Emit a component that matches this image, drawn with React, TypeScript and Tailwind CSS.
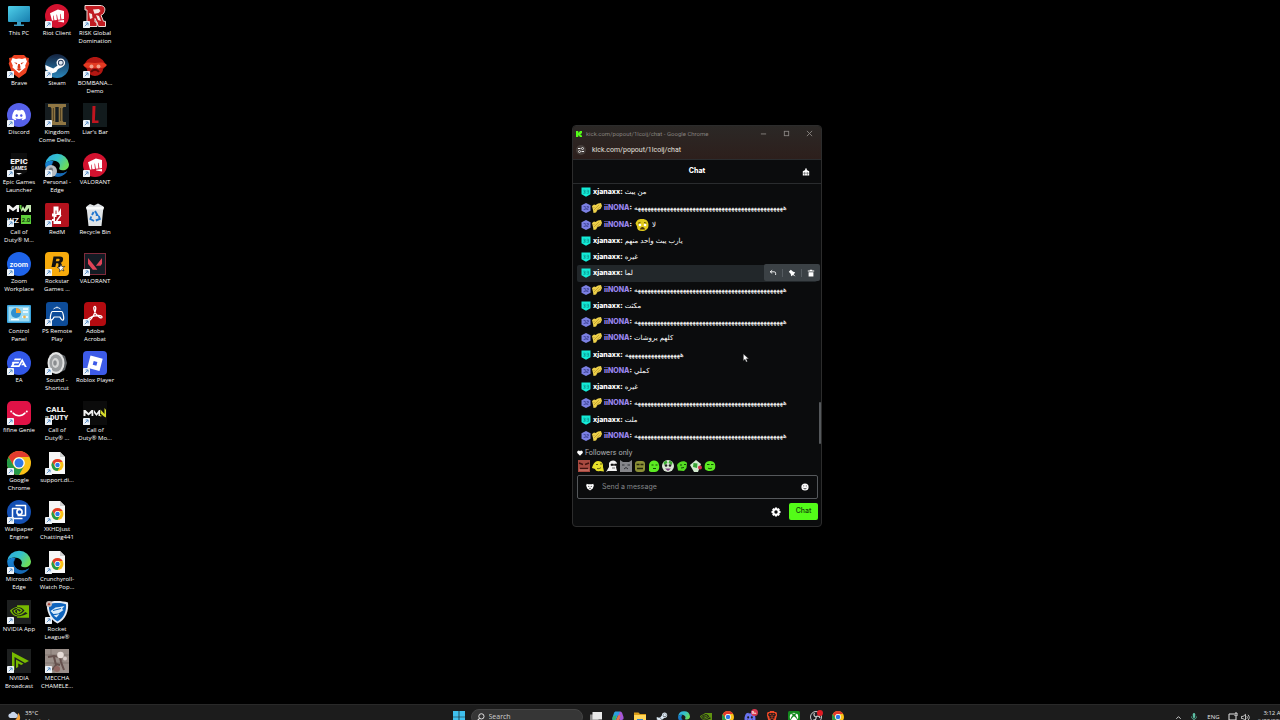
import type { ReactNode } from "react";
import { FaDiscord, FaSteamSymbol, FaXbox } from "react-icons/fa";
import { SiBrave, SiNvidia, SiRiotgames, SiValorant } from "react-icons/si";

/* ---------- Icon drawings (24 x 24 box) ---------- */

function Box({ children, className = "size-6" }: { children: ReactNode; className?: string }) {
  return (
    <svg viewBox="0 0 24 24" className={className} aria-hidden="true">
      {children}
    </svg>
  );
}

function ChromeMark({ className = "size-6" }: { className?: string }) {
  return (
    <Box className={className}>
      <ChromeShape />
    </Box>
  );
}

function ChromeShape() {
  return (
    <>
      <circle cx="12" cy="12" r="12" fill="#fbc116" />
      <path d="M1.6 6A12 12 0 0 1 22.4 6H12a6 6 0 0 0-5.2 9z" fill="#e33b2e" />
      <path d="M1.6 6A12 12 0 0 0 12 24l5.2-9A6 6 0 0 1 6.8 15z" fill="#249a47" />
      <circle cx="12" cy="12" r="5.8" fill="#fff" />
      <circle cx="12" cy="12" r="4.5" fill="#2f78e8" />
    </>
  );
}

function EdgeMark({ className = "size-6" }: { className?: string }) {
  return (
    <Box className={className}>
      <defs>
        <linearGradient id="edgeTop" x1="0" y1="0" x2="1" y2="0.5">
          <stop offset="0" stopColor="#2aa7e6" />
          <stop offset="0.55" stopColor="#35c2c9" />
          <stop offset="1" stopColor="#6bdc5c" />
        </linearGradient>
        <linearGradient id="edgeLow" x1="0" y1="0" x2="1" y2="1">
          <stop offset="0" stopColor="#1a8ad9" />
          <stop offset="1" stopColor="#0c4f9c" />
        </linearGradient>
      </defs>
      <path d="M0.2 11A12 12 0 0 1 24 11.2c0 4-3 6-6.3 6-3 0-4.200-1.200-3.400-2.400 1-1.400.8-3.600-.6-5C10.500 6.600 3 6.500.2 11z" fill="url(#edgeTop)" />
      <path d="M.2 11C2 7.800 6 7.200 8.600 8.400 6 10.500 6 15 9 18c3 3 8 3.300 13.200.2A12 12 0 0 1 .2 11z" fill="url(#edgeLow)" />
      <path d="M8.600 8.400C6 10.500 6 15 9 18c3 3 8 3.300 13.200.2-2.500 4-6.500 5.600-9.800 5.600-5-1-8.500-8.300-3.800-15.400z" fill="#176bb5" />
    </Box>
  );
}

function PageWithChrome() {
  return (
    <Box>
      <path d="M4 1h11l5 5v17H4z" fill="#f7f7f7" />
      <path d="M15 1l5 5h-5z" fill="#cfcfcf" />
      <g transform="translate(6.500 8) scale(0.5)">
        <ChromeShape />
      </g>
    </Box>
  );
}

function NvidiaTile() {
  return (
    <Box>
      <rect width="24" height="24" fill="#1d1f1f" />
      <SiNvidia x="3" y="2" size="19" color="#77b900" />
    </Box>
  );
}

type Shortcut = { name: string; lines: string[]; icon: ReactNode; arrow?: boolean };

const riot = (
  <Box>
    <circle cx="12" cy="12" r="12" fill="#d3122f" />
    <SiRiotgames x="5" y="5" size="14" color="#fff" />
  </Box>
);

const columns: Shortcut[][] = [
  [
    {
      name: "This PC",
      lines: ["This PC"],
      arrow: false,
      icon: (
        <Box>
          <defs>
            <linearGradient id="pc" x1="0" y1="0" x2="1" y2="1">
              <stop offset="0" stopColor="#4fd0ea" />
              <stop offset="1" stopColor="#167dae" />
            </linearGradient>
          </defs>
          <rect x="1" y="2" width="22" height="16" rx="1" fill="url(#pc)" />
          <path d="M10 18h4v2.500h3V22H7v-1.500h3z" fill="#3c9cc2" />
        </Box>
      ),
    },
    {
      name: "Brave",
      lines: ["Brave"],
      icon: (
        <Box>
          <path d="M7 1h10l2.500 2.500L22 4l-.5 3.500.8 2L19 19l-7 5-7-5L1.700 9.500l.8-2L2 4l2.500-.5z" fill="#ee4322" />
          <path d="M12 4.500l3 .4 3.500-.8 1.500 3.500-1.800 4 .3 2-3 2.300L12 19l-3.500-3.100-3-2.300.3-2L4 7.600l1.500-3.500 3.500.8z" fill="#fff" />
          <path d="M7 8.200l3.300.9-.5 1.400zM17 8.200l-3.300.9.5 1.400zM11.200 10h1.600l.8 3.500L12 14.500l-1.600-1zM9.500 15l2.500-1 2.500 1-2.500 2z" fill="#d83a1c" />
        </Box>
      ),
    },
    {
      name: "Discord",
      lines: ["Discord"],
      icon: (
        <Box>
          <circle cx="12" cy="12" r="12" fill="#5661ea" />
          <FaDiscord x="4.500" y="4.500" size="15" color="#fff" />
        </Box>
      ),
    },
    {
      name: "Epic Games Launcher",
      lines: ["Epic Games", "Launcher"],
      icon: (
        <Box>
          <path d="M4 0h16v19l-8 4.500L4 19z" fill="#0d0d0d" />
          <text x="12" y="11" textAnchor="middle" fontSize="8" fontWeight="900" fill="#f2f2f2" className="font-['Roboto',sans-serif]">EPIC</text>
          <text x="12" y="17" textAnchor="middle" fontSize="4.500" fontWeight="700" fill="#f2f2f2" className="font-['Roboto',sans-serif]">GAMES</text>
          <path d="M9 20h6l-3 1.800z" fill="#f2f2f2" />
        </Box>
      ),
    },
    {
      name: "Call of Duty MWIII",
      lines: ["Call of", "Duty® M..."],
      icon: (
        <Box>
          <path d="M0 9V2h2.500L6 5l3.500-3H12v7h-2.200V5.500L6 8.300 2.200 5.500V9z" fill="#f0f0f0" />
          <path d="M12.500 2l2 4 1.500-3 1.500 3 2-4H24v7h-2V5l-3.500 4h-1L16 7l-1.500 2z" fill="#c6ecb2" />
          <path d="M12.500 2h2v5l-2-2z" fill="#5fd03a" />
          <text x="0" y="20" fontSize="8" fontWeight="700" fill="#f0f0f0" className="font-['Roboto',sans-serif]">WZ</text>
          <rect x="14" y="12" width="10" height="9" fill="#5fd03a" />
          <text x="19" y="18.500" textAnchor="middle" fontSize="6" fontWeight="700" fill="#143c0c" className="font-['Roboto',sans-serif]">2.0</text>
        </Box>
      ),
    },
    {
      name: "Zoom Workplace",
      lines: ["Zoom", "Workplace"],
      icon: (
        <Box>
          <circle cx="12" cy="12" r="12" fill="#1e63e9" />
          <text x="12" y="14.500" textAnchor="middle" fontSize="7.500" fontWeight="700" fill="#fff" className="font-['Lato',sans-serif]">zoom</text>
        </Box>
      ),
    },
    {
      name: "Control Panel",
      lines: ["Control", "Panel"],
      arrow: false,
      icon: (
        <Box>
          <rect x="0" y="3" width="24" height="18" rx="1" fill="#3aa4dc" />
          <rect x="1.500" y="4.500" width="21" height="15" fill="#9bdcf5" />
          <circle cx="9" cy="11" r="5" fill="#2d8fd0" />
          <path d="M9 11V6a5 5 0 0 1 5 5z" fill="#f4a63a" />
          <path d="M16 7h5M16 10h5M4 17.500h8M15 15h6" stroke="#fff" strokeWidth="1.500" />
          <circle cx="17.500" cy="15" r="1.400" fill="#f0b04a" />
        </Box>
      ),
    },
    {
      name: "EA",
      lines: ["EA"],
      icon: (
        <Box>
          <circle cx="12" cy="12" r="12" fill="#3258e8" />
          <path d="M7.800 7.500h6.400l-.9 1.700H6.900zM5.600 10.700h6.800l-1 1.700H7.600l-1 1.900h4.900l3.700-6.800L19.800 16h-2l-.9-1.700h-2.700l1-1.700h.9l-.9-1.700-2.800 5.100H3.500l2-3.600h-.8z" fill="#fff" />
        </Box>
      ),
    },
    {
      name: "fifine Genie",
      lines: ["fifine Genie"],
      icon: (
        <Box>
          <rect width="24" height="24" rx="5" fill="#e01246" />
          <path d="M6 12c3 3.600 9 3.600 12 0" fill="none" stroke="#fff" strokeWidth="1.500" strokeLinecap="round" />
          <circle cx="4.200" cy="10.500" r="1" fill="#fff" />
          <circle cx="19.800" cy="10.500" r="1" fill="#fff" />
        </Box>
      ),
    },
    { name: "Google Chrome", lines: ["Google", "Chrome"], icon: <ChromeMark /> },
    {
      name: "Wallpaper Engine",
      lines: ["Wallpaper", "Engine"],
      icon: (
        <Box>
          <circle cx="12" cy="12" r="12" fill="#1450b4" />
          <path d="M8.500 5.500h10v8M15.500 18.500h-10v-8M5.500 13V8.500h8M18.500 11v4.500h-8" fill="none" stroke="#fff" strokeWidth="1.500" strokeLinejoin="round" />
          <circle cx="12.500" cy="12" r="2.600" fill="none" stroke="#fff" strokeWidth="1.600" />
        </Box>
      ),
    },
    { name: "Microsoft Edge", lines: ["Microsoft", "Edge"], icon: <EdgeMark /> },
    { name: "NVIDIA App", lines: ["NVIDIA App"], icon: <NvidiaTile /> },
    {
      name: "NVIDIA Broadcast",
      lines: ["NVIDIA", "Broadcast"],
      icon: (
        <Box>
          <rect width="24" height="24" fill="#1d1f1f" />
          <path d="M5 3l17 9-4 2L7.500 8v13L5 22z" fill="#77b900" />
          <path d="M9 10.500l7.500 4.300-2.300 1.300-3-1.700V18L9 19.200z" fill="#77b900" />
        </Box>
      ),
    },
  ],
  [
    { name: "Riot Client", lines: ["Riot Client"], icon: riot },
    {
      name: "Steam",
      lines: ["Steam"],
      icon: (
        <Box>
          <defs>
            <linearGradient id="steam" x1="0" y1="0" x2="0" y2="1">
              <stop offset="0" stopColor="#14233f" />
              <stop offset="1" stopColor="#2a86bb" />
            </linearGradient>
          </defs>
          <circle cx="12" cy="12" r="12" fill="url(#steam)" />
          <path d="M.3 11l8 3.400 4-2.600 2-2.500 3.500 3.500-4.700 2.200-2 3-3.600 1.200L.8 15.500z" fill="#fff" />
          <circle cx="15.800" cy="8.700" r="4.300" fill="#fff" />
          <circle cx="15.800" cy="8.700" r="2.900" fill="#23395c" />
          <circle cx="15.800" cy="8.700" r="2" fill="#dfe6ee" />
        </Box>
      ),
    },
    {
      name: "Kingdom Come Deliverance II",
      lines: ["Kingdom", "Come Deliv..."],
      icon: (
        <Box>
          <rect width="24" height="24" fill="#161d20" />
          <path d="M3 1h18v3h-2.500l-1 1.500v12l1 1.500H21V22H3v-3h2.500l1-1.500v-12L5.500 4H3z" fill="#8f7643" />
          <path d="M10.300 4h3.400v15h-3.400z" fill="#161d20" />
          <path d="M8.400 5v13M15.600 5v13" stroke="#4f3f22" strokeWidth="1" />
        </Box>
      ),
    },
    {
      name: "Personal - Edge",
      lines: ["Personal -", "Edge"],
      icon: (
        <span className="relative block">
          <EdgeMark />
          <svg viewBox="0 0 12 12" className="absolute bottom-0 left-0 size-3" aria-hidden="true">
            <circle cx="6" cy="6" r="6" fill="#b9bdc2" />
            <circle cx="6" cy="4.500" r="2" fill="#73787e" />
          </svg>
        </span>
      ),
    },
    {
      name: "RedM",
      lines: ["RedM"],
      icon: (
        <Box>
          <rect width="24" height="24" rx="1.500" fill="#b3121d" />
          <path d="M8.500 3.500h3v4h-1v3.500h1V3.500h2v6L16 5v7h-4.500v2h-1.500v4h6V21H8.500v-3H7v-2h1.500v-2.500H7v-3h1.500z" fill="#fff" />
          <path d="M11.500 18l4.500-6" stroke="#fff" strokeWidth="1.400" />
        </Box>
      ),
    },
    {
      name: "Rockstar Games Launcher",
      lines: ["Rockstar", "Games ..."],
      icon: (
        <Box>
          <rect width="24" height="24" rx="4" fill="#f7ab0c" />
          <path d="M8.500 4.500h6.200c2.600 0 3.800 1 3.300 3.400-.3 1.600-1.200 2.500-2.500 2.900 1 .5 1.200 1.200 1 2.700l-.2 1.500h-3.100l.3-2.400c.1-1-.2-1.400-1.200-1.400h-1.100L10.300 15H6.500zm2.900 2.300l-.6 2.500h2c1 0 1.700-.4 1.800-1.300.2-.9-.3-1.200-1.200-1.200z" fill="#111" />
          <path d="M16 12l1 2.700 2.800-.3-2 2 1.200 2.600-2.500-1.200-2.100 1.900.2-2.800-2.300-1.500 2.700-.7z" fill="#fff" stroke="#111" strokeWidth="0.600" />
        </Box>
      ),
    },
    {
      name: "PS Remote Play",
      lines: ["PS Remote", "Play"],
      icon: (
        <Box>
          <rect x="1" width="22" height="24" rx="3" fill="#0d4c99" />
          <path d="M7.500 9.500h9c1.500 0 3 7.500 1.700 8.500-1.300.8-2.700-2-3.300-3H9.100c-.6 1-2 3.800-3.300 3-1.300-1 .2-8.500 1.700-8.500z" fill="none" stroke="#fff" strokeWidth="1.200" />
          <path d="M8.500 7a5 5 0 0 1 7 0M12 4.500v1" fill="none" stroke="#fff" strokeWidth="0.900" />
        </Box>
      ),
    },
    {
      name: "Sound Shortcut",
      lines: ["Sound -", "Shortcut"],
      icon: (
        <Box>
          <path d="M12 1l8 4 2 7-2 7-8 4z" fill="#5c6064" />
          <ellipse cx="11" cy="12" rx="8.500" ry="11" fill="#e3e4e4" />
          <ellipse cx="11" cy="12" rx="6.500" ry="8.800" fill="#9b9ea0" />
          <ellipse cx="10.500" cy="12" rx="3.500" ry="5" fill="#d5d6d6" />
          <ellipse cx="10" cy="12" rx="1.800" ry="2.800" fill="#8a8d90" />
        </Box>
      ),
    },
    {
      name: "Call of Duty HQ",
      lines: ["Call of", "Duty® ..."],
      icon: (
        <Box>
          <text x="1" y="11" fontSize="8" fontWeight="900" fill="#eee" className="font-['Roboto',sans-serif]">CALL</text>
          <text x="0" y="18" fontSize="3" fontWeight="700" fill="#eee" className="font-['Roboto',sans-serif]">OF</text>
          <text x="5" y="18.500" fontSize="7" fontWeight="900" fill="#eee" className="font-['Roboto',sans-serif]">DUTY</text>
        </Box>
      ),
    },
    { name: "support.discord", lines: ["support.di..."], icon: <PageWithChrome /> },
    { name: "XKHDJust Chatting441", lines: ["XKHDJust", "Chatting441"], icon: <PageWithChrome /> },
    { name: "Crunchyroll Watch Popular", lines: ["Crunchyroll-", "Watch Pop..."], icon: <PageWithChrome /> },
    {
      name: "Rocket League",
      lines: ["Rocket", "League®"],
      icon: (
        <Box>
          <path d="M2 2.500C7 .500 17 .500 23 2.500c1 8-2 17-10.500 21C4.500 19.500 1 10.500 2 2.500z" fill="#e8eef5" />
          <path d="M4 4.200c5-1.500 12-1.500 17 0 .6 6.600-2 13.800-8.500 17.300C6 18 3.300 10.800 4 4.200z" fill="#0e64bd" />
          <path d="M5.500 11l5-3.500 4-.5 5-1-2.500 3 1.500 1-5 3.500-5 .5zM8.500 15.500l6-1.500-3 3.500z" fill="#d9ecfb" />
          <path d="M8 10.500l8-2" stroke="#0e64bd" strokeWidth="1" />
          <circle cx="4" cy="4" r="3" fill="#c9b7b2" />
          <path d="M2.500 4.500l1.500-2 1.500 2-1.500 1z" fill="#a23a30" />
        </Box>
      ),
    },
    {
      name: "MECCHA CHAMELEON",
      lines: ["MECCHA", "CHAMELE..."],
      icon: (
        <Box>
          <rect width="24" height="24" fill="#9b8f89" />
          <path d="M0 6h24M0 14h24M6 0v6M17 6v8M9 14v10" stroke="#776b66" strokeWidth="0.700" />
          <path d="M3 8l6-1 6 1 1 5 3 8M9 8l2 8-4 5M11 15l4 1" fill="none" stroke="#65514d" strokeWidth="2" />
          <circle cx="15.500" cy="6" r="3.300" fill="#e6dcd7" />
          <circle cx="20" cy="9.500" r="2" fill="#d8ccc8" />
          <circle cx="12" cy="20" r="3" fill="#8e6560" />
        </Box>
      ),
    },
  ],
  [
    {
      name: "RISK Global Domination",
      lines: ["RISK Global", "Domination"],
      icon: (
        <Box>
          <path d="M2 1.500h15c4.500 0 5.500 3 4.500 6-.6 2-1.600 3-3.500 3.800l2.500 6h2v5.200h-7L12 14.500V18h2v4.500H2V18h2V6H2z" fill="#c01b20" stroke="#f0dcd8" strokeWidth="1" />
          <path d="M10 5.500l6-.5 1.500 2-2 2-4 .8zM6 9l3 1 .5 4L7 15zM13 11l3 1 2 5-3-1z" fill="#f4e8e4" />
        </Box>
      ),
    },
    {
      name: "BOMBANANA Demo",
      lines: ["BOMBANA...", "Demo"],
      icon: (
        <Box>
          <path d="M1 12C3 5 8 3 12 3s9 2 11 9l-3 3c0 4-4 7-8 7s-8-3-8-7z" fill="#b31712" />
          <path d="M0 11c4-4 8-2 12-2s8-2 12 2c-3 4-7 3-12 3S3 15 0 11z" fill="#e33a22" />
          <circle cx="8.500" cy="12.500" r="2" fill="#f2a08a" />
          <circle cx="15.500" cy="12.500" r="2" fill="#f2a08a" />
          <path d="M8 18c2-3 6-3 8 0" stroke="#5b0906" strokeWidth="2" fill="none" />
        </Box>
      ),
    },
    {
      name: "Liar's Bar",
      lines: ["Liar's Bar"],
      icon: (
        <Box>
          <rect width="24" height="24" fill="#121b1d" />
          <path d="M9.500 3h3l-.6 14.500h3.600V20H9z" fill="#c0151f" />
        </Box>
      ),
    },
    { name: "VALORANT (Riot)", lines: ["VALORANT"], icon: riot },
    {
      name: "Recycle Bin",
      lines: ["Recycle Bin"],
      arrow: false,
      icon: (
        <Box>
          <path d="M3.500 3.500L7 1l4 1.500L15 .500l5.500 3L18.500 23h-13z" fill="#dfe3e6" />
          <path d="M3 4h18l-.5 2.500h-17z" fill="#f8fafb" />
          <path d="M12 8l2.400 4h-1.600M15.800 13l1 3-4 1.500M8.200 13.500L7.400 16l3.600 2M9 12l1.600-3" fill="none" stroke="#2277cf" strokeWidth="1.900" />
        </Box>
      ),
    },
    {
      name: "VALORANT",
      lines: ["VALORANT"],
      icon: (
        <Box>
          <rect x="1.500" y="1.500" width="21" height="21" fill="#141b24" stroke="#7e2b3b" strokeWidth="1" />
          <SiValorant x="5" y="5" size="14" color="#e04357" />
        </Box>
      ),
    },
    {
      name: "Adobe Acrobat",
      lines: ["Adobe", "Acrobat"],
      icon: (
        <Box>
          <rect x="1" y="0" width="22" height="24" rx="4" fill="#b30b10" />
          <path d="M11.500 4.500c2-.6 1.600 4-.8 8.500-2 3.800-4.600 6.600-5.700 5.600-1.200-1.200 3-4.200 7-4.800 3.500-.6 7.400-.2 7 1.400-.5 1.700-4-.3-6-3.200-1.900-2.600-3-7-1.500-7.500z" fill="none" stroke="#fff" strokeWidth="1.300" />
        </Box>
      ),
    },
    {
      name: "Roblox Player",
      lines: ["Roblox Player"],
      icon: (
        <Box>
          <rect width="24" height="24" rx="4" fill="#3d5be8" />
          <path d="M7.500 4.500l12.200 3.200-3.200 12.200L4.300 16.700zm3.200 5.500l-1 3.700 3.700 1 1-3.700z" fill="#fff" fillRule="evenodd" />
        </Box>
      ),
    },
    {
      name: "Call of Duty Modern Warfare",
      lines: ["Call of", "Duty® Mo..."],
      icon: (
        <Box>
          <rect width="24" height="24" fill="#0b0b0b" />
          <path d="M.5 15V9h2L5.500 12 8.500 9h1.800v6H8.500v-3l-3 2.500-3-2.500v3zM11 9l2.500 3.500L16 9h1v6h-1.500v-2.500L13.500 15 11 12z" fill="#f2f2f2" />
          <path d="M17.500 8.500l4 4.500V7l1.500 2v7.500l-2-1-3.500-3zM18 16l-1.500-2 2 .5z" fill="#d6dc2c" />
        </Box>
      ),
    },
  ],
];

function ShortcutArrow() {
  return (
    <svg viewBox="0 0 8 8" className="absolute bottom-0 left-0 size-[7px]" aria-hidden="true">
      <rect width="8" height="8" rx="1" fill="#eef3f8" />
      <path d="M2 6l3.600-3.600M3 2.200h2.800V5" stroke="#4a86c4" strokeWidth="1" fill="none" />
    </svg>
  );
}

function DesktopIcon({ item }: { item: Shortcut }) {
  return (
    <li className="flex justify-center">
      <button type="button" aria-label={item.name} className="flex h-fit flex-col items-center">
        <span className="relative block size-6">
          {item.icon}
          {item.arrow !== false && <ShortcutArrow />}
        </span>
        <span className="mt-px block text-center text-[6px] leading-[8px] font-medium whitespace-nowrap text-white">
          {item.lines.map((line) => (
            <span key={line} className="block">
              {line}
            </span>
          ))}
        </span>
      </button>
    </li>
  );
}

/* ---------- Chat window ---------- */

type Message = { user: "x" | "n"; text: string; emote?: boolean; active?: boolean };

const longLaugh = "ه".repeat(47);
const shortLaugh = "ه".repeat(18);

const messages: Message[] = [
  { user: "x", text: "من يبث" },
  { user: "n", text: longLaugh },
  { user: "n", text: "لا", emote: true },
  { user: "x", text: "يارب يبث واحد منهم" },
  { user: "x", text: "غيره" },
  { user: "x", text: "لما", active: true },
  { user: "n", text: longLaugh },
  { user: "x", text: "مكثت" },
  { user: "n", text: longLaugh },
  { user: "n", text: "كلهم يروشات" },
  { user: "x", text: shortLaugh },
  { user: "n", text: "كملي" },
  { user: "x", text: "غيره" },
  { user: "n", text: longLaugh },
  { user: "x", text: "ملت" },
  { user: "n", text: longLaugh },
];

function ShieldBadge() {
  return (
    <svg viewBox="0 0 10 10" className="size-[10px] shrink-0" aria-hidden="true">
      <path d="M.5.5h9v6.700L5 9.800.5 7.200z" fill="#14ecd8" />
      <path d="M2.200 3.200h2v1.300H3v.6h1.200v1.200h-2M5.600 3.200h2v3.100h-2M5.600 4.700h2" stroke="#0b8583" strokeWidth="0.600" fill="none" />
    </svg>
  );
}

function HexBadge() {
  return (
    <svg viewBox="0 0 10 10" className="size-[10px] shrink-0" aria-hidden="true">
      <path d="M5 0l4.500 2.300v5.400L5 10 .5 7.700V2.300z" fill="#7b80e2" />
      <path d="M2.600 3.500h1.700v3H2.600M5.700 3.500h1.700v1.500H5.700v1.500h1.700" stroke="#3d4194" strokeWidth="0.800" fill="none" />
    </svg>
  );
}

function GoldBadge() {
  return (
    <svg viewBox="0 0 10 10" className="size-[10px] shrink-0" aria-hidden="true">
      <path d="M0 3l2-1.500 1.500.5L6 .5 9 0l1 3-1.500 3-3 1L4 9.500 1.500 10 1 7 .5 5z" fill="#edd04a" />
      <path d="M2 7l5-5M4.500 7l4-3.500M1.500 4l1 1" stroke="#a88522" strokeWidth="0.600" />
    </svg>
  );
}

function CryEmote() {
  return (
    <svg viewBox="0 0 14 12" className="ml-[3px] h-3 w-[14px] shrink-0" aria-hidden="true">
      <path d="M.5 4.500C2 0 5 0 7.500 0 11 0 13.500 2 13.500 6c0 4-3 6-6.500 6-3.500 0-5-1.500-5-4.500z" fill="#e0cb1e" />
      <path d="M3 4.200l2.500-.8M11.500 4.200L9 3.400" stroke="#5a4a05" strokeWidth="0.900" />
      <circle cx="5" cy="6" r="1.300" fill="#fff" />
      <circle cx="10" cy="6" r="1.300" fill="#fff" />
      <path d="M5 10.500c.3-3.500 4.500-3.500 5 0z" fill="#46340a" />
    </svg>
  );
}

function MessageTools() {
  return (
    <div className="absolute top-[-1px] right-px flex h-[17px] w-[56px] items-center justify-center gap-[5px] rounded-[2px] bg-[#3b4145] text-white">
      <button type="button" aria-label="Reply">
        <svg viewBox="0 0 10 10" className="size-2">
          <path d="M4 1.500L1.500 3.500 4 5.500M1.500 3.500h5A1.800 1.800 0 0 1 8.300 5.300V7.500" fill="none" stroke="currentColor" strokeWidth="1.100" />
        </svg>
      </button>
      <span className="h-2 w-px bg-[#555b60]" />
      <button type="button" aria-label="Pin">
        <svg viewBox="0 0 10 10" className="size-2">
          <path d="M1 3.500L3.500 1l3 2.500 1.500.2 1 1L7 6.500 9.500 9.500 6 7.500 4.700 9l-1-1-.2-1.800z" fill="currentColor" />
        </svg>
      </button>
      <span className="h-2 w-px bg-[#555b60]" />
      <button type="button" aria-label="Delete">
        <svg viewBox="0 0 10 10" className="size-2">
          <path d="M3.500 1h3v1H9v1.200H1V2h2.500zM2 4h6v5.500H2z" fill="currentColor" />
        </svg>
      </button>
    </div>
  );
}

function MessageRow({ message }: { message: Message }) {
  const isX = message.user === "x";
  return (
    <li className="relative flex items-center px-1">
      <div className={`flex h-full grow items-center rounded-[2px] pl-1 ${message.active ? "bg-[#22272a]" : ""}`}>
        {isX ? (
          <ShieldBadge />
        ) : (
          <span className="flex items-center gap-px">
            <HexBadge />
            <GoldBadge />
          </span>
        )}
        <span className={`ml-[2px] text-[7px] leading-4 font-extrabold ${isX ? "text-white" : "text-[#9a86ee]"}`}>
          {isX ? "xjanaxx" : "iiNONA"}
          <span className="text-white">:</span>
        </span>
        {message.emote && <CryEmote />}
        <bdi dir="rtl" className={`text-[7px] leading-4 whitespace-nowrap text-white ${message.emote ? "ml-[3px]" : "ml-[2px]"}`}>
          {message.text}
        </bdi>
      </div>
      {message.active && <MessageTools />}
    </li>
  );
}

const emotes: { name: string; art: ReactNode }[] = [
  {
    name: "Angry",
    art: (
      <>
        <rect width="12" height="12" fill="#a84a40" />
        <path d="M1 3l4 1.500M11 3L7 4.500M2 8.500h8" stroke="#43130f" strokeWidth="1.500" />
        <path d="M1 10h10" stroke="#d98478" />
      </>
    ),
  },
  {
    name: "Yellow",
    art: (
      <>
        <path d="M0 8c1-4 3-7 6-7 4 0 5.500 3 5 6l1 4.500-4-.5c-3 .5-4 0-5-2z" fill="#e5e02a" />
        <path d="M4 4.500h2M8 4h2M5 8.500c1.500.5 3 0 4-1" stroke="#55520c" strokeWidth="0.900" fill="none" />
      </>
    ),
  },
  {
    name: "Ghost",
    art: (
      <>
        <path d="M3 3c2-4 8-3 8 1l-1 3 1 4H2L0 12l3-5z" fill="#f2f2f2" />
        <path d="M5 4h2.500v1.500H5zM8.500 4H11v1.500H8.500zM6 8h3" fill="#111" stroke="#111" strokeWidth="0.600" />
      </>
    ),
  },
  {
    name: "Cat",
    art: (
      <>
        <path d="M0 0l3 2h6l3-2v12H0z" fill="#85868a" />
        <path d="M2 5h2.500M7.500 5H10M4 9l2-1.500L8 9" stroke="#313236" strokeWidth="1" fill="none" />
      </>
    ),
  },
  {
    name: "Toad",
    art: (
      <>
        <rect x="1" y="1" width="10" height="11" rx="3" fill="#8c9137" />
        <path d="M2.500 4.500h3M6.500 4.500h3M3 8.500h6" stroke="#23260a" strokeWidth="1.600" />
      </>
    ),
  },
  {
    name: "Blob",
    art: (
      <>
        <path d="M1 6a5 5 0 0 1 10-1c1 4-1 7-4 7-4 0-5 0-6-1z" fill="#5bea22" />
        <path d="M3.500 5h2M7.500 5h2M5 8.500h3" stroke="#134d05" strokeWidth="1" />
      </>
    ),
  },
  {
    name: "Clown",
    art: (
      <>
        <circle cx="6" cy="6" r="6" fill="#d9e6d4" />
        <path d="M1.500 2l3-1.500 1 2.500-3.500 2zM10.500 2l-3-1.500-1 2.500L10 5z" fill="#3fae35" />
        <circle cx="4" cy="5.500" r="1.300" fill="#222" />
        <circle cx="8" cy="5.500" r="1.300" fill="#222" />
        <path d="M3 8.500h6L6 11z" fill="#7d3c7f" />
      </>
    ),
  },
  {
    name: "Nod",
    art: (
      <>
        <path d="M1 5c2-4 8-5 10-2l-.5 5L8 11 2 10.500z" fill="#54dc22" />
        <path d="M4 5h2M8 4.500h2M5 8l3-.5" stroke="#134d05" />
      </>
    ),
  },
  {
    name: "Rose",
    art: (
      <>
        <path d="M6 0l5 4-3 8H4L0 5z" fill="#d4ecd0" />
        <path d="M3.500 3l4 .5L7 8l-4-1z" fill="#37a433" />
        <circle cx="10" cy="7.500" r="2" fill="#d0304a" />
      </>
    ),
  },
  {
    name: "Smile",
    art: (
      <>
        <path d="M1 4c1-4 9-4 10 0 .8 4 0 7-5 7S0 9 1 4z" fill="#5bea22" />
        <path d="M3 4.500h2.500M7 4.500h2.500M4 8c1 1 3 1 4 0" stroke="#134d05" fill="none" />
      </>
    ),
  },
];

function ChatWindow() {
  return (
    <section
      aria-label="Chat popout"
      className="absolute top-[125px] left-[572px] flex w-[250px] flex-col overflow-hidden rounded-[4px] border border-[#2c2c2c] bg-[#0b0c0d]"
    >
      <header className="bg-gradient-to-b from-[#2b2826] to-[#2d1f1c]">
        <div className="flex h-[15px] items-center pr-2 pl-[3px]">
          <svg viewBox="0 0 8 8" className="size-[6px]" aria-hidden="true">
            <path d="M0 0h3v2h1V1h1V0h3v3H7v1H6v1h1v1h1v2H5V7H4V6H3v2H0z" fill="#53fc18" />
          </svg>
          <h1 className="ml-1 grow font-['Roboto',sans-serif] text-[6px] leading-[15px] whitespace-nowrap text-[#85807d]">
            kick.com/popout/1lcoij/chat - Google Chrome
          </h1>
          <div className="flex items-center gap-4 text-[#8b8784]">
            <button type="button" aria-label="Minimize">
              <svg viewBox="0 0 8 8" className="size-[7px]"><path d="M1 4.500h6" stroke="currentColor" /></svg>
            </button>
            <button type="button" aria-label="Maximize">
              <svg viewBox="0 0 8 8" className="size-[7px]"><rect x="1.500" y="1.500" width="5" height="5" fill="none" stroke="currentColor" /></svg>
            </button>
            <button type="button" aria-label="Close">
              <svg viewBox="0 0 8 8" className="size-[7px]"><path d="M1 1l6 6M7 1L1 7" stroke="currentColor" /></svg>
            </button>
          </div>
        </div>
        <div className="flex h-[18px] items-center gap-[6px] pl-[3px]">
          <svg viewBox="0 0 10 10" className="size-[10px]" aria-hidden="true">
            <circle cx="5" cy="5" r="5" fill="#453d3a" />
            <path d="M2 3.500h2.500M5.500 6.500H8" stroke="#eee" />
            <circle cx="6.500" cy="3.500" r="1" fill="none" stroke="#eee" strokeWidth="0.800" />
            <circle cx="3.500" cy="6.500" r="1" fill="none" stroke="#eee" strokeWidth="0.800" />
          </svg>
          <span className="font-['Roboto',sans-serif] text-[7px] text-[#e4e0de]">kick.com/popout/1lcoij/chat</span>
        </div>
      </header>

      <div className="relative flex h-[25px] items-center justify-center border-y border-[#2a2c2e]">
        <h2 className="text-[7px] font-extrabold text-white">Chat</h2>
        <button type="button" aria-label="Community" className="absolute right-[11px] text-white">
          <svg viewBox="0 0 10 10" className="size-2">
            <path d="M4 .5h2v2l3 1.500v5.500H1V4l3-1.500z" fill="currentColor" />
            <path d="M3.300 5v4.500M6.700 5v4.500M1 6.500h8" stroke="#0b0c0d" strokeWidth="0.500" />
          </svg>
        </button>
      </div>

      <div className="relative">
        <ul className="grid h-[260px] auto-rows-fr">
          {messages.map((message, index) => (
            <MessageRow key={index} message={message} />
          ))}
        </ul>
        <span className="absolute right-0 bottom-0 h-[42px] w-[2px] rounded-full bg-[#55585b]" />
      </div>

      <div className="flex flex-col pt-1 pr-[3px] pb-[6px] pl-1">
        <p className="flex h-[10px] items-center gap-[2px] text-[7px] text-[#b4b6b8]">
          <svg viewBox="0 0 10 10" className="size-[6px]" aria-hidden="true">
            <path d="M5 9.500L.5 5C-.500 2 3-.500 5 2c2-2.500 5.500 0 4.500 3z" fill="#fff" />
          </svg>
          Followers only
        </p>
        <div className="mt-[2px] ml-px flex gap-[2px]">
          {emotes.map((emote) => (
            <button key={emote.name} type="button" aria-label={emote.name}>
              <svg viewBox="0 0 12 12" className="size-3">{emote.art}</svg>
            </button>
          ))}
        </div>
        <form className="mt-[3px]" onSubmit={(event) => event.preventDefault()}>
          <div className="flex h-6 items-center rounded-[2px] border border-[#55585b] px-2">
            <svg viewBox="0 0 10 10" className="size-2" aria-hidden="true">
              <path d="M1 1l1.500.5h5L9 1l.8 2L8.500 7 5 9.500 1.500 7 .200 3z" fill="#fff" />
              <path d="M2.500 4l1.800.8M7.500 4l-1.800.8M4 7h2" stroke="#111" strokeWidth="0.800" />
            </svg>
            <input
              type="text"
              aria-label="Send a message"
              placeholder="Send a message"
              className="ml-2 w-0 grow bg-transparent text-[7px] text-white outline-none placeholder:text-[#85888b]"
            />
            <button type="button" aria-label="Emotes">
              <svg viewBox="0 0 10 10" className="size-2">
                <circle cx="5" cy="5" r="4.500" fill="#fff" />
                <path d="M3.400 3v1.300M6.600 3v1.300M2.700 6c1 1.800 3.600 1.800 4.600 0" stroke="#111" strokeWidth="0.900" fill="none" />
              </svg>
            </button>
          </div>
          <div className="mt-1 flex items-center justify-end gap-2">
            <button type="button" aria-label="Settings">
              <svg viewBox="0 0 10 10" className="size-[10px]">
                <path d="M4 .500h2l.3 1.300 1.200-.7 1.400 1.400-.7 1.200L9.500 4v2l-1.300.3.7 1.200-1.400 1.400-1.200-.7L6 9.500H4l-.3-1.300-1.200.7-1.400-1.400.7-1.200L.5 6V4l1.300-.3-.7-1.200 1.400-1.400 1.200.7z" fill="#fff" />
                <circle cx="5" cy="5" r="1.700" fill="#0b0c0d" />
              </svg>
            </button>
            <button type="submit" className="h-[17px] w-[29px] rounded-[2px] bg-[#53fc18] text-[7px] font-medium text-[#14420a]">
              Chat
            </button>
          </div>
        </form>
      </div>
    </section>
  );
}

function Pointer() {
  return (
    <svg viewBox="0 0 8 12" className="pointer-events-none absolute top-[353px] left-[743px] h-[10px] w-[6px]" aria-hidden="true">
      <path d="M.5.5v9l2.200-2 1.500 3.700 1.600-.7-1.500-3.500h3.200z" fill="#fff" stroke="#222" strokeWidth="0.500" />
    </svg>
  );
}

/* ---------- Taskbar ---------- */

const taskApps: { name: string; icon: ReactNode }[] = [
  {
    name: "Task view",
    icon: (
      <Box className="size-3">
        <rect x="0" y="7" width="17" height="15" fill="#8c8c8c" />
        <rect x="5" y="2" width="19" height="15" fill="#eaeaea" />
      </Box>
    ),
  },
  {
    name: "Copilot",
    icon: (
      <Box className="size-3">
        <path d="M8 1h8l3 8h-7L7 20H5C1 20 0 17 1 13L4 4c1-2 2-3 4-3z" fill="#2b9fe0" />
        <path d="M16 1c3 0 4 2 5 5l2 6c1 4-1 6-4 6h-4l-3-8z" fill="#a557d8" />
        <path d="M12 9l5-1-3 12c-1 3-3 3-6 3-2 0-3-2-3-3h2z" fill="#e2764f" />
        <path d="M2 11l7-3-3 12c-4 0-5-3-5-5z" fill="#37b46b" />
      </Box>
    ),
  },
  {
    name: "File Explorer",
    icon: (
      <Box className="size-3">
        <path d="M0 3h9l3 3h12v16H0z" fill="#d99b17" />
        <path d="M0 8h24v14H0z" fill="#ffd75a" />
        <rect x="6" y="16" width="12" height="6" fill="#2f7fd0" />
      </Box>
    ),
  },
  { name: "Steam", icon: <FaSteamSymbol className="size-3 text-[#dce9f3]" /> },
  { name: "Edge", icon: <EdgeMark className="size-3" /> },
  { name: "NVIDIA", icon: <SiNvidia className="size-3 text-[#5f9310]" /> },
  { name: "Chrome", icon: <ChromeMark className="size-3" /> },
  {
    name: "Discord",
    icon: (
      <span className="relative block">
        <FaDiscord className="size-3 text-[#6a74f0]" />
        <span className="absolute -top-[2px] -right-[2px] flex size-[7px] items-center justify-center rounded-full bg-[#d63a50] text-[4px] leading-none font-bold text-white">9+</span>
      </span>
    ),
  },
  { name: "Brave", icon: <SiBrave className="size-3 text-[#f04a28]" /> },
  {
    name: "Xbox",
    icon: (
      <Box className="size-3">
        <rect width="24" height="24" rx="3" fill="#138a1d" />
        <FaXbox x="3" y="3" size="18" color="#fff" />
      </Box>
    ),
  },
  {
    name: "OBS Studio",
    icon: (
      <span className="relative block">
        <Box className="size-3">
          <circle cx="12" cy="12" r="11" fill="#1f1f23" stroke="#c9c9c9" strokeWidth="2" />
          <path d="M12 12c-4-1-5-5-3-8M12 12c3-3 7-2 8 2M12 12c1 4-2 7-6 6" stroke="#c9c9c9" strokeWidth="2.500" fill="none" />
        </Box>
        <span className="absolute -top-px -right-px size-[6px] rounded-full bg-[#e01b24]" />
      </span>
    ),
  },
  { name: "Chrome profile", icon: <ChromeMark className="size-3" /> },
];

function Taskbar() {
  return (
    <footer className="h-4 shrink-0 overflow-hidden border-t border-[#292929] bg-[#1c1c1c] font-['Open_Sans',sans-serif]">
      <div className="grid h-6 grid-cols-[minmax(0,1fr)_auto_minmax(0,1fr)] items-center pl-2">
        <div className="flex items-center gap-[3px]">
          <svg viewBox="0 0 14 14" className="size-[14px]" aria-hidden="true">
            <path d="M10 3c3 2 3 8-1 10-3 1-5 0-6-2 4 1 7-3 7-8z" fill="#f2a13a" />
            <path d="M2 8a2.300 2.300 0 0 1 .5-4.500 3 3 0 0 1 5.500 0 2.300 2.300 0 0 1 0 4.500z" fill="#c9d5ea" />
          </svg>
          <div className="text-[6px] leading-[8px] font-medium text-[#eee]">
            <p>35°C</p>
            <p className="text-[#aaa]">Mostly clear</p>
          </div>
        </div>

        <nav aria-label="Taskbar" className="ml-2 flex items-center">
          <button type="button" aria-label="Start">
            <Box className="size-3">
              <path d="M0 0h11.300v11.300H0zM12.700 0H24v11.300H12.700zM0 12.700h11.300V24H0zM12.700 12.700H24V24H12.700z" fill="#3fc0ee" />
            </Box>
          </button>
          <label className="ml-[6px] flex h-4 w-28 items-center gap-1 rounded-full border border-[#444] bg-[#363636] px-[5px]">
            <svg viewBox="0 0 10 10" className="size-2 shrink-0" aria-hidden="true">
              <circle cx="5.500" cy="4.200" r="3.300" fill="none" stroke="#e8e8e8" strokeWidth="1.200" />
              <path d="M3.200 6.600L.6 9.300" stroke="#e8e8e8" strokeWidth="1.300" />
            </svg>
            <input type="search" aria-label="Search" placeholder="Search" className="w-0 grow bg-transparent text-[7px] outline-none placeholder:text-[#cfcfcf]" />
          </label>
          <div className="ml-[7px] flex items-center gap-[10px]">
            {taskApps.map((app) => (
              <button key={app.name} type="button" aria-label={app.name}>
                {app.icon}
              </button>
            ))}
          </div>
        </nav>

        <div className="flex items-center justify-end text-[#e4e4e4]">
          <svg viewBox="0 0 8 8" className="size-[7px]" aria-hidden="true">
            <path d="M1.500 5.500L4 3l2.500 2.500" fill="none" stroke="currentColor" />
          </svg>
          <svg viewBox="0 0 8 8" className="ml-2 size-2" aria-hidden="true">
            <rect x="2.800" y="0" width="2.400" height="5" rx="1.200" fill="#5cc0a4" />
            <path d="M1.500 3.500c0 3.500 5 3.500 5 0M4 6v2" fill="none" stroke="#5cc0a4" strokeWidth="0.800" />
          </svg>
          <span className="ml-[9px] text-[6px]">ENG</span>
          <svg viewBox="0 0 10 10" className="ml-2 size-[10px]" aria-hidden="true">
            <path d="M6 2H1v6h7V5M3 9.500h4M7 1h2v3H7z" fill="none" stroke="currentColor" />
          </svg>
          <svg viewBox="0 0 10 10" className="ml-[3px] size-[9px]" aria-hidden="true">
            <path d="M.5 3.800h1.800L5 1.500v7L2.300 6.200H.5zM6.300 3.500c1 1 1 2 0 3M7.800 2c1.800 2 1.800 4 0 6" fill="none" stroke="currentColor" strokeWidth="0.900" />
          </svg>
          <div className="-mr-[6px] ml-2 text-right text-[6px] leading-[8px] font-medium whitespace-nowrap">
            <p>3:12 AM</p>
            <p>6/30/2025</p>
          </div>
        </div>
      </div>
    </footer>
  );
}

export default function App() {
  return (
    <div className="relative flex h-screen flex-col overflow-hidden bg-black font-['Inter','DejaVu_Sans',sans-serif]">
      <main className="min-h-0 grow">
        <div className="flex h-full pt-1 pb-[5px] font-['Open_Sans',sans-serif]">
          {columns.map((column, index) => (
            <ul key={index} className="grid h-full w-[38px] grid-rows-[repeat(14,minmax(0,1fr))]">
              {column.map((item) => (
                <DesktopIcon key={item.name} item={item} />
              ))}
            </ul>
          ))}
        </div>
        <ChatWindow />
        <Pointer />
      </main>
      <Taskbar />
    </div>
  );
}
